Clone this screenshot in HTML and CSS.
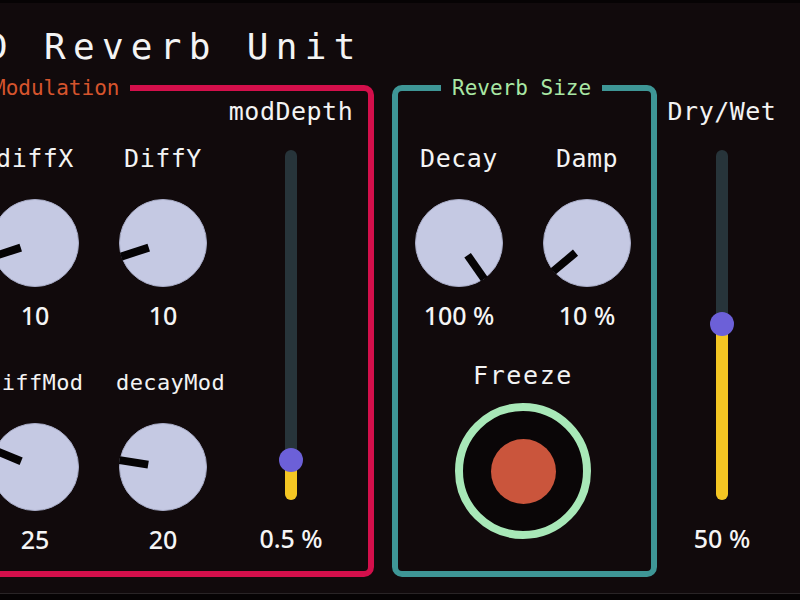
FILE: index.html
```html
<!DOCTYPE html>
<html lang="en">
<head>
<meta charset="utf-8">
<title>Reverb Unit</title>
<link rel="stylesheet" href="styles.css">
</head>
<body>
<div class="plugin">
  <h1 class="title">D Reverb Unit</h1>
  <div class="panels">
    <fieldset class="group group-mod">
      <legend class="legend legend-mod">Modulation</legend>
      <div class="mod-grid">
        <div class="knob-col">
          <div class="control">
            <div class="label">diffX</div>
            <svg class="knob" viewBox="0 0 88 88"><circle class="knob-body" cx="44" cy="44" r="43.5"/><rect class="knob-mark" x="40" y="0" width="8" height="29" transform="rotate(-108 44 44)"/></svg>
            <div class="value">10</div>
          </div>
          <div class="control">
            <div class="label label-small">diffMod</div>
            <svg class="knob" viewBox="0 0 88 88"><circle class="knob-body" cx="44" cy="44" r="43.5"/><rect class="knob-mark" x="40" y="0" width="8" height="29" transform="rotate(-67.5 44 44)"/></svg>
            <div class="value">25</div>
          </div>
        </div>
        <div class="knob-col">
          <div class="control">
            <div class="label">DiffY</div>
            <svg class="knob" viewBox="0 0 88 88"><circle class="knob-body" cx="44" cy="44" r="43.5"/><rect class="knob-mark" x="40" y="0" width="8" height="29" transform="rotate(-108 44 44)"/></svg>
            <div class="value">10</div>
          </div>
          <div class="control">
            <div class="label label-small">decayMod</div>
            <svg class="knob" viewBox="0 0 88 88"><circle class="knob-body" cx="44" cy="44" r="43.5"/><rect class="knob-mark" x="40" y="0" width="8" height="29" transform="rotate(-81 44 44)"/></svg>
            <div class="value">20</div>
          </div>
        </div>
        <div class="slider-col">
          <div class="label">modDepth</div>
          <div class="slider" style="--pos: 40px">
            <div class="slider-fill"></div>
            <div class="slider-thumb"></div>
          </div>
          <div class="value">0.5 %</div>
        </div>
      </div>
    </fieldset>
    <fieldset class="group group-size">
      <legend class="legend legend-size">Reverb Size</legend>
      <div class="size-grid">
        <div class="control">
          <div class="label">Decay</div>
          <svg class="knob" viewBox="0 0 88 88"><circle class="knob-body" cx="44" cy="44" r="43.5"/><rect class="knob-mark" x="40" y="0" width="8" height="29" transform="rotate(145 44 44)"/></svg>
          <div class="value">100 %</div>
        </div>
        <div class="control">
          <div class="label">Damp</div>
          <svg class="knob" viewBox="0 0 88 88"><circle class="knob-body" cx="44" cy="44" r="43.5"/><rect class="knob-mark" x="40" y="0" width="8" height="29" transform="rotate(-130 44 44)"/></svg>
          <div class="value">10 %</div>
        </div>
        <div class="freeze">
          <div class="label label-freeze">Freeze</div>
          <button class="freeze-btn" type="button" aria-label="Freeze"><span class="freeze-dot"></span></button>
        </div>
      </div>
    </fieldset>
    <div class="slider-col drywet">
      <div class="label">Dry/Wet</div>
      <div class="slider" style="--pos: 176px">
        <div class="slider-fill"></div>
        <div class="slider-thumb"></div>
      </div>
      <div class="value">50 %</div>
    </div>
  </div>
</div>
</body>
</html>
```
FILE: styles.css
```css
html, body {
  margin: 0;
  padding: 0;
  background: #060304;
  overflow: hidden;
}

.plugin {
  display: flow-root;
  margin: 3px 0 0 -67px;
  width: 900px;
  height: 590px;
  background: #110a0c;
  border-bottom: 1px solid #292426;
  color: #f3f3f3;
  font-family: "DejaVu Sans Mono", "Liberation Mono", monospace;
}

.title {
  margin: 26px 0 0 53px;
  font-size: 36px;
  line-height: 36px;
  font-weight: normal;
  letter-spacing: 7.3px;
  white-space: pre;
  color: #f4f4f4;
}

.panels {
  display: flex;
  align-items: stretch;
  gap: 18px;
  margin-top: 15px;
}

.group {
  margin: 0;
  padding: 0;
  min-width: 0;
  border: 6px solid;
  border-radius: 10px;
  box-sizing: border-box;
}

.group-mod {
  width: 441px;
  border-color: #d30f4b;
}

.group-size {
  width: 265px;
  border-color: #3e9696;
}

.legend {
  margin-left: 43px;
  padding: 0 11px;
  font-size: 21px;
  line-height: 16px;
}

.legend-mod { color: #d6542d; }
.legend-size { color: #a9e7a4; }

.mod-grid {
  display: grid;
  grid-template-columns: 128px 128px 128px;
  padding: 0 0 17px 32px;
}

.knob-col {
  display: flex;
  flex-direction: column;
  gap: 38px;
  padding-top: 48px;
}

.control {
  display: flex;
  flex-direction: column;
  align-items: center;
}

.label {
  font-size: 25px;
  line-height: 30px;
  letter-spacing: 0.5px;
  white-space: nowrap;
  color: #f3f3f3;
}

.label-small {
  align-self: flex-start;
  margin-left: 17px;
  font-size: 22px;
  letter-spacing: 0.4px;
}

.label-freeze {
  letter-spacing: 1.6px;
}

.knob {
  display: block;
  width: 88px;
  height: 88px;
  margin-top: 25px;
}

.knob-body {
  fill: #c5c9e3;
  stroke: #a9adc8;
  stroke-width: 1;
}

.knob-mark {
  fill: #050304;
}

.value {
  margin-top: 13px;
  font-family: "Noto Sans", "Open Sans", sans-serif;
  font-size: 25px;
  font-weight: 500;
  line-height: 30px;
  white-space: pre;
  color: #f5f5f5;
}

.slider-col {
  display: flex;
  flex-direction: column;
  align-items: center;
  padding-top: 1px;
}

.drywet {
  width: 130px;
  margin-left: -18px;
  padding-top: 17px;
}

.slider {
  position: relative;
  width: 12px;
  height: 350px;
  margin-top: 23px;
  background: #27343a;
  border-radius: 6px;
}

.slider + .value {
  margin-top: 23px;
}

.slider-fill {
  position: absolute;
  left: 0;
  right: 0;
  bottom: 0;
  height: var(--pos);
  background: #f4c623;
  border-radius: 6px;
}

.slider-thumb {
  position: absolute;
  left: 50%;
  bottom: calc(var(--pos) - 12px);
  width: 24px;
  height: 24px;
  margin-left: -12px;
  border-radius: 50%;
  background: #6c60d8;
}

.size-grid {
  display: grid;
  grid-template-columns: 128px 128px;
  justify-content: center;
  padding: 48px 3px 0 0;
}

.freeze {
  grid-column: 1 / -1;
  display: flex;
  flex-direction: column;
  align-items: center;
  margin-top: 31px;
}

.freeze-btn {
  display: flex;
  align-items: center;
  justify-content: center;
  box-sizing: border-box;
  width: 136px;
  height: 136px;
  margin-top: 12px;
  padding: 0;
  border: 8px solid #a8e8b8;
  border-radius: 50%;
  background: #0a0607;
}

.freeze-dot {
  display: block;
  width: 65px;
  height: 65px;
  border-radius: 50%;
  background: #ca553c;
}
```
